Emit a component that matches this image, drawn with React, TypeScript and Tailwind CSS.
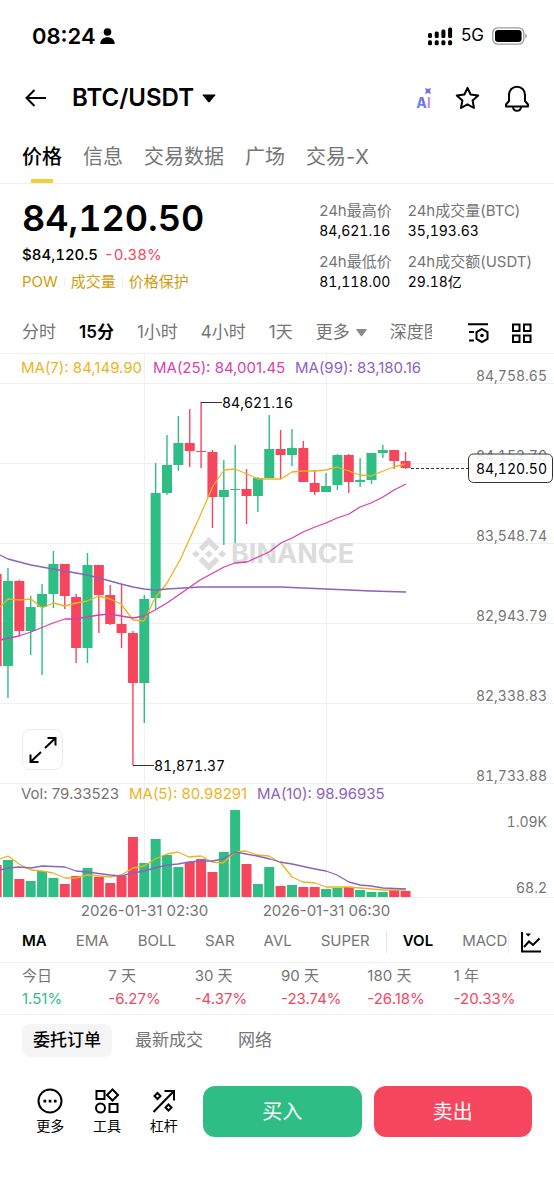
import React, { useState } from 'react';
import { clsx } from 'clsx';
import { SiBinance } from 'react-icons/si';

type Side = 'up' | 'down';
// [side, high, bodyTop, bodyBottom, low, volumeTop]
type Candle = [Side, number, number, number, number, number];

const STEP = 11.36;
const FIRST_X = -3.4;
const BODY = 10;
const VOLUME_BASE = 897;

const COLORS = {
  up: '#2ebd85',
  down: '#f6465d',
  yellow: '#ebb41f',
  pink: '#d93fb0',
  purple: '#8a63bd',
  grid: '#f0f0f0',
  label: '#757575',
};

const candles: Candle[] = [
  ['down', 574, 574, 666, 666, 865],
  ['up', 568, 581, 666, 698, 860],
  ['down', 580, 581, 631, 636, 879],
  ['up', 596, 607, 631, 655, 881],
  ['up', 584, 594, 607, 675, 871],
  ['up', 551, 564, 594, 608, 878],
  ['down', 564, 564, 596, 609, 884],
  ['down', 594, 597, 648, 663, 876],
  ['up', 553, 565, 648, 663, 868],
  ['down', 565, 565, 595, 633, 877],
  ['down', 585, 595, 624, 625, 883],
  ['down', 584, 624, 633, 648, 876],
  ['down', 631, 633, 683, 765, 837],
  ['up', 595, 599, 683, 723, 863],
  ['up', 463, 493, 598, 610, 839],
  ['up', 435, 465, 493, 495, 855],
  ['up', 416, 443, 465, 471, 867],
  ['down', 409, 443, 451, 467, 862],
  ['down', 402, 451, 452, 468, 859],
  ['down', 450, 452, 497, 528, 872],
  ['up', 460, 490, 497, 545, 852],
  ['up', 445, 489, 490, 543, 810],
  ['down', 469, 489, 496, 524, 864],
  ['up', 477, 478, 496, 512, 884],
  ['up', 415, 449, 478, 478, 867],
  ['down', 430, 449, 455, 479, 886],
  ['up', 429, 448, 455, 466, 885],
  ['down', 441, 448, 482, 482, 887],
  ['down', 470, 483, 492, 495, 887],
  ['up', 473, 486, 492, 492, 889],
  ['up', 454, 455, 485, 490, 888],
  ['down', 454, 455, 482, 493, 887],
  ['up', 458, 480, 482, 487, 890],
  ['up', 453, 453, 480, 484, 892],
  ['up', 445, 450, 453, 458, 892],
  ['down', 450, 450, 461, 469, 890],
  ['down', 452, 461, 468, 469, 891],
];

const priceLines = [
  {
    color: COLORS.yellow,
    points:
      '0,607 8,599 19,600 31,599 42,608 53,603 65,606 76,603 87,601 99,596 110,599 121,604 133,620 144,621 155,598 167,583 180,560 200,516 213,486 224,470 235,469 247,474 258,479 269,479 281,479 292,472 303,471 315,471 326,470 337,467 349,471 360,475 371,476 383,471 394,467 405,464',
  },
  {
    color: COLORS.pink,
    points:
      '0,640 19,636 31,632 53,623 65,619 76,619 87,617 99,615 110,614 121,616 133,618 144,616 155,610 167,603 180,594 200,580 213,573 224,567 235,563 247,562 258,557 269,552 281,543 292,538 303,532 315,527 326,523 337,518 349,514 360,507 371,503 383,497 394,490 406,484',
  },
  {
    color: COLORS.purple,
    points:
      '0,555 8,559 31,565 53,569 76,573 87,575 99,578 110,581 121,584 133,587 144,589 155,590 167,589 200,587 235,587 281,587 303,588 326,589 349,590 371,591 406,592',
  },
];

const volumeLines = [
  {
    color: COLORS.yellow,
    points:
      '0,859 8,856 19,864 31,870 42,871 53,873 65,878 76,878 87,875 99,876 110,877 121,875 133,868 144,866 155,859 167,854 178,852 189,857 201,856 212,862 223,863 235,852 246,851 257,855 269,856 281,863 292,877 303,882 315,883 326,887 349,887 360,888 383,890 406,890',
  },
  {
    color: COLORS.purple,
    points:
      '0,870 8,868 19,867 31,868 42,866 65,867 76,871 87,872 110,875 121,876 133,873 144,871 155,868 167,865 178,864 189,862 201,861 212,861 223,859 235,852 246,854 257,856 270,859 280,862 292,864 315,869 326,871 337,875 349,882 360,885 371,886 383,888 406,889',
  },
];

const axis = [
  { y: 383, text: '84,758.65' },
  { y: 463, text: '84,153.70' },
  { y: 543, text: '83,548.74' },
  { y: 623, text: '82,943.79' },
  { y: 703, text: '82,338.83' },
  { y: 783, text: '81,733.88' },
];

const stats = [
  { label: '今日', value: '1.51%', up: true },
  { label: '7 天', value: '-6.27%' },
  { label: '30 天', value: '-4.37%' },
  { label: '90 天', value: '-23.74%' },
  { label: '180 天', value: '-26.18%' },
  { label: '1 年', value: '-20.33%' },
];

const summary = [
  { label: '24h最高价', value: '84,621.16' },
  { label: '24h成交量(BTC)', value: '35,193.63' },
  { label: '24h最低价', value: '81,118.00' },
  { label: '24h成交额(USDT)', value: '29.18亿' },
];

function StatusBar() {
  return (
    <div className="flex h-[72px] items-center justify-between pl-8 pr-[26px]">
      <div className="flex items-center gap-1">
        <span className="text-[22px] font-semibold">08:24</span>
        <svg width="15" height="16" viewBox="0 0 15 16" fill="currentColor">
          <circle cx="7.5" cy="4" r="3.8" />
          <path d="M0.3 16C0.3 11.5 3.5 9.2 7.5 9.2S14.7 11.5 14.7 16Z" />
        </svg>
      </div>
      <div className="flex items-center gap-2">
        <svg width="25" height="19" viewBox="0 0 25 19" fill="currentColor">
          <rect x="0" y="6" width="4" height="5" rx="1.5" />
          <rect x="6.7" y="4.4" width="4" height="6.6" rx="1.5" />
          <rect x="13.4" y="2.4" width="4" height="8.6" rx="1.5" />
          <rect x="20.1" y="0.6" width="4" height="10.4" rx="1.5" />
          <rect x="0" y="13.2" width="4" height="5" rx="1.5" />
          <rect x="6.7" y="13.2" width="4" height="5" rx="1.5" />
          <rect x="13.4" y="13.2" width="4" height="5" rx="1.5" />
          <rect x="20.1" y="13.2" width="4" height="5" rx="1.5" />
        </svg>
        <span className="text-[17px]">5G</span>
        <svg width="36" height="18" viewBox="0 0 36 18">
          <rect x="0.8" y="0.8" width="31" height="16.4" rx="5" fill="none" stroke="#999" strokeWidth="1.3" />
          <rect x="3" y="3" width="26.6" height="12" rx="3" fill="#000" />
          <path d="M33.3 6.5c2 .8 2 4.200 0 5z" fill="#999" />
        </svg>
      </div>
    </div>
  );
}

function Header() {
  return (
    <header className="flex h-[52px] items-center px-6">
      <button type="button" aria-label="返回">
        <svg width="24" height="20" viewBox="0 0 24 20" fill="none" stroke="currentColor" strokeWidth="2">
          <path d="M22 10H2.500M10.500 2L2.500 10L10.500 18" />
        </svg>
      </button>
      <button type="button" className="ml-6 flex items-center gap-2 text-2xl font-semibold">
        BTC/USDT
        <svg width="14" height="9" viewBox="0 0 14 9" fill="currentColor">
          <path d="M1 .5h12q.8 0 .3.700L7.800 8q-.8.800-1.600 0L.7 1.200Q.2.500 1 .5z" />
        </svg>
      </button>
      <div className="ml-auto flex items-center gap-6">
        <button type="button" className="relative bg-linear-to-r from-[#6aa0f5] via-[#6b6cf0] to-[#dba8e8] bg-clip-text pt-[10px] text-sm font-extrabold text-transparent">
          AI
          <svg className="absolute right-0 top-[5px]" width="6" height="6" viewBox="0 0 6 6" fill="#6f74ee">
            <path d="M0 0L3 1L6 0L5 3L6 6L3 5L0 6L1 3Z" />
          </svg>
        </button>
        <button type="button" aria-label="收藏">
          <svg width="25" height="25" viewBox="0 0 25 25" fill="none" stroke="currentColor" strokeWidth="2" strokeLinejoin="round">
            <path d="M12.500 1.800L15.600 8.500L23.200 9.400L17.600 14.500L19 22L12.500 18.300L6 22L7.400 14.500L1.800 9.400L9.400 8.500Z" />
          </svg>
        </button>
        <button type="button" aria-label="提醒">
          <svg width="26" height="27" viewBox="0 0 26 27" fill="none" stroke="currentColor" strokeWidth="2" strokeLinejoin="round">
            <path d="M2 21.500V19.500L5 16V10C5 5 8.500 1.800 13 1.800S21 5 21 10V16L24 19.500V21.500Z" />
            <path d="M9 22C9.400 27 16.600 27 17 22" />
          </svg>
        </button>
      </div>
    </header>
  );
}

function Tabs() {
  const [active, setActive] = useState('价格');
  return (
    <nav className="flex h-[60px] items-stretch gap-[21px] border-b border-[#f0f0f0] px-[22px] text-xl">
      {['价格', '信息', '交易数据', '广场', '交易-X'].map((tab) => (
        <button
          key={tab}
          type="button"
          onClick={() => setActive(tab)}
          className={clsx(
            'relative pb-[2px] pt-2',
            active === tab ? 'font-medium text-black' : 'text-[#757575]'
          )}
        >
          {tab}
          {active === tab && (
            <span className="absolute bottom-0 left-1/2 h-1 w-[22px] -translate-x-1/2 bg-[#f3cf36]" />
          )}
        </button>
      ))}
    </nav>
  );
}

function PriceSummary() {
  return (
    <section className="flex items-start justify-between pl-[22px] pr-[22px] pt-2">
      <div>
        <div className="pt-1 text-4xl font-semibold leading-[44px] tabular-nums">84,120.50</div>
        <div className="mt-[3px] flex gap-[6px] text-[15px] leading-6 tabular-nums">
          <span className="font-medium">$84,120.5</span>
          <span className="text-[#f6465d]">-0.38%</span>
        </div>
        <div className="mt-[3px] flex items-center gap-[6px] text-[15px] leading-6 text-[#d19c0b]">
          <a href="#pow">POW</a>
          <span className="h-2 w-px bg-[#eee]" />
          <a href="#volume">成交量</a>
          <span className="h-2 w-px bg-[#eee]" />
          <a href="#protect">价格保护</a>
        </div>
      </div>
      <dl className="grid grid-cols-[auto_auto] gap-x-4 gap-y-[11px] pt-[9px]">
        {summary.map((item) => (
          <div key={item.label} className="leading-5">
            <dt className="text-[15px] leading-5 text-[#757575]">{item.label}</dt>
            <dd className="text-sm leading-5 tabular-nums">{item.value}</dd>
          </div>
        ))}
      </dl>
    </section>
  );
}

function Intervals() {
  const [active, setActive] = useState('15分');
  return (
    <div className="mt-[19px] flex h-10 items-center justify-between px-[22px]">
      <div className="flex flex-1 items-center gap-[23px] overflow-hidden whitespace-nowrap text-[17px] text-[#757575]">
        {['分时', '15分', '1小时', '4小时', '1天'].map((item) => (
          <button
            key={item}
            type="button"
            onClick={() => setActive(item)}
            className={clsx(active === item && 'font-semibold text-black')}
          >
            {item}
          </button>
        ))}
        <button type="button" className="flex items-center gap-[6px]">
          更多
          <svg width="11" height="8" viewBox="0 0 11 8" fill="#8a8a8a">
            <path d="M.5 0h10q.6.200.2.700L6 7.300q-.5.500-1 0L.3.700Q0 .2.500 0z" />
          </svg>
        </button>
        <button type="button">深度图</button>
      </div>
      <div className="flex shrink-0 items-center gap-[22px] pl-9">
        <button type="button" aria-label="图表设置">
          <svg width="22" height="22" viewBox="0 0 22 22" fill="none" stroke="currentColor" strokeWidth="2">
            <path d="M0 2.200H20M1 10H6M1 18.500H6" />
            <path d="M14 7L19.500 10.200V16.800L14 20L8.500 16.800V10.200Z" />
            <circle cx="14" cy="13.500" r="1.800" fill="currentColor" stroke="none" />
          </svg>
        </button>
        <button type="button" aria-label="布局">
          <svg width="20" height="20" viewBox="0 0 20 20" fill="none" stroke="currentColor" strokeWidth="2">
            <path d="M1 1.500H7.500V8H1ZM12 1.500H18.500V8H12ZM1 12.500H7.500V19H1ZM12 12.500H18.500V19H12Z" />
          </svg>
        </button>
      </div>
    </div>
  );
}

function Chart() {
  return (
    <section className="relative">
      <svg className="block h-auto w-full" viewBox="0 353 554 568" fontSize="15">
        {/* Grid */}
        <g stroke={COLORS.grid}>
          <path d="M0 353.500H554M0 897.500H554M144.500 353V897M326.500 353V897" />
          {axis.map((a) => (
            <line key={a.y} x1="0" x2="554" y1={a.y + 0.5} y2={a.y + 0.5} />
          ))}
        </g>

        {/* Watermark */}
        <g fill="#dcdcdc" color="#dcdcdc">
          <SiBinance x="192" y="537" size={34} />
          <text x="231" y="563" fontSize="27" fontWeight="700">BINANCE</text>
        </g>

        <g fill={COLORS.label} textAnchor="end" fontSize="14" className="tabular-nums">
          {axis.map((a) => (
            <text key={a.y} x="547" y={a.y - 2}>{a.text}</text>
          ))}
          <text x="547" y="827">1.09K</text>
          <text x="547" y="893">68.2</text>
        </g>

        {/* Candles and volume */}
        {candles.map(([side, high, top, bottom, low, volume], i) => {
          const x = FIRST_X + i * STEP;
          return (
            <g key={i} fill={COLORS[side]}>
              <rect x={x - 0.7} y={high} width="1.4" height={low - high} />
              <rect x={x - BODY / 2} y={top} width={BODY} height={Math.max(bottom - top, 1)} />
              <rect x={x - BODY / 2} y={volume} width={BODY} height={VOLUME_BASE - volume} />
            </g>
          );
        })}

        {[...priceLines, ...volumeLines].map((line, i) => (
          <polyline key={i} points={line.points} fill="none" stroke={line.color} strokeWidth="1.3" strokeLinejoin="round" />
        ))}

        {/* High and low marks */}
        <g stroke="#333" strokeWidth="1">
          <path d="M201 402.500H222M133 765.500H154" />
          <path d="M411 468.500H468" strokeDasharray="3 2" />
        </g>
        <g fontSize="14" className="tabular-nums">
          <text x="222" y="408">84,621.16</text>
          <text x="154" y="771">81,871.37</text>

          {/* Last price */}
          <rect x="468.500" y="454" width="84" height="28.500" rx="5" fill="#fff" fillOpacity="0.85" stroke="#333" />
          <text x="547" y="474" textAnchor="end">84,120.50</text>
        </g>

        <g fill={COLORS.label} textAnchor="middle">
          <text x="144.500" y="916">2026-01-31 02:30</text>
          <text x="326.500" y="916">2026-01-31 06:30</text>
        </g>

        {/* Legends */}
        <text x="21" y="373" fill={COLORS.yellow}>MA(7): 84,149.90</text>
        <text x="153" y="373" fill={COLORS.pink}>MA(25): 84,001.45</text>
        <text x="295" y="373" fill={COLORS.purple}>MA(99): 83,180.16</text>
        <text x="21" y="799" fill={COLORS.label}>Vol: 79.33523</text>
        <text x="129" y="799" fill={COLORS.yellow}>MA(5): 80.98291</text>
        <text x="257" y="799" fill={COLORS.purple}>MA(10): 98.96935</text>
      </svg>

      <button
        type="button"
        aria-label="全屏"
        className="absolute bottom-[151px] left-[22px] flex size-[41px] items-center justify-center rounded-lg border border-[#ececec] bg-white"
      >
        <svg width="28" height="28" viewBox="0 0 28 28" fill="none" stroke="currentColor" strokeWidth="2">
          <path d="M16 12L26 2.500M18.500 2H26.500V9.500M12 16L2 25.500M9.500 26H1.500V18.500" />
        </svg>
      </button>
    </section>
  );
}

function Indicators() {
  return (
    <div className="flex h-[42px] items-center border-b border-[#f0f0f0] pl-[22px] pr-3 text-[15px] text-[#757575]">
      <div className="flex flex-1 items-center gap-[29px] overflow-hidden whitespace-nowrap">
        <button type="button" className="font-semibold text-black">MA</button>
        <button type="button">EMA</button>
        <button type="button">BOLL</button>
        <button type="button">SAR</button>
        <button type="button">AVL</button>
        <button type="button">SUPER</button>
        <span className="-mx-[13px] h-[22px] w-px shrink-0 bg-[#e8e8e8]" />
        <button type="button" className="font-semibold text-black">VOL</button>
        <button type="button">MACD</button>
      </div>
      <button type="button" aria-label="指标设置" className="shrink-0 border-l border-[#eee] pl-3 text-black">
        <svg width="21" height="22" viewBox="0 0 21 22" fill="none" stroke="currentColor" strokeWidth="2">
          <path d="M1 1V20.500H20" />
          <path d="M3 16L8 10.500L12 14L18.500 7.500" />
          <path d="M4.500 2.500H10L7.200 5.500Z" fill="currentColor" stroke="none" />
        </svg>
      </button>
    </div>
  );
}

function Stats() {
  return (
    <div className="border-b border-[#f0f0f0] pb-1 pl-[22px] pr-[14px] pt-[1px]">
      <table className="w-full table-fixed text-left text-[15px] leading-[23px]">
        <thead>
          <tr className="text-[#757575]">
            {stats.map((s) => (
              <th key={s.label} className="p-0 font-normal">{s.label}</th>
            ))}
          </tr>
        </thead>
        <tbody>
          <tr>
            {stats.map((s) => (
              <td key={s.label} className={clsx('p-0', s.up ? 'text-[#2ebd85]' : 'text-[#f6465d]')}>
                {s.value}
              </td>
            ))}
          </tr>
        </tbody>
      </table>
    </div>
  );
}

function OrderTabs() {
  return (
    <div className="flex items-center gap-[23px] px-[22px] pt-[9px] text-[17px] text-[#757575]">
      <button type="button" className="h-[33px] rounded-lg bg-[#f5f5f5] px-[11px] font-medium text-black">委托订单</button>
      <button type="button">最新成交</button>
      <button type="button" className="ml-3">网络</button>
    </div>
  );
}

function BottomBar() {
  return (
    <footer className="mt-[29px] flex items-center px-[22px] pb-[63px]">
      <div className="flex w-[170px] text-sm">
        <button type="button" className="flex flex-1 flex-col items-center gap-[2px]">
          <svg width="26" height="26" viewBox="0 0 26 26" fill="none" stroke="currentColor" strokeWidth="2">
            <circle cx="13" cy="13" r="11.500" />
            <path d="M6.500 11.700h2.700v2.700H6.500zM11.700 11.700h2.700v2.700h-2.700zM16.900 11.700h2.700v2.700h-2.700z" fill="currentColor" stroke="none" />
          </svg>
          更多
        </button>
        <button type="button" className="flex flex-1 flex-col items-center gap-[2px]">
          <svg width="26" height="26" viewBox="0 0 26 26" fill="none" stroke="currentColor" strokeWidth="2">
            <path d="M2.500 3H10.500V11H2.500ZM18.500 1.500L24 7L18.500 12.500L13 7ZM15.500 16H23.500V24H15.500Z" />
            <circle cx="6.500" cy="20" r="4.500" />
          </svg>
          工具
        </button>
        <button type="button" className="flex flex-1 flex-col items-center gap-[2px]">
          <svg width="26" height="26" viewBox="0 0 26 26" fill="none" stroke="currentColor" strokeWidth="2">
            <path d="M2.500 24L22.500 3.500M13.500 3H23V12.500" />
            <path d="M6.500 5L9.500 8L6.500 11L3.500 8ZM17.500 16.500L20.500 19.500L17.500 22.500L14.500 19.500Z" />
          </svg>
          杠杆
        </button>
      </div>
      <div className="ml-[11px] flex flex-1 gap-3 text-xl text-white">
        <button type="button" className="h-[51px] flex-1 rounded-xl bg-[#2ebd85]">买入</button>
        <button type="button" className="h-[51px] flex-1 rounded-xl bg-[#f6465d]">卖出</button>
      </div>
    </footer>
  );
}

export default function App() {
  return (
    <main className="min-h-screen bg-white font-['Inter','Noto_Sans_CJK_SC',sans-serif] text-black">
      <StatusBar />
      <Header />
      <Tabs />
      <PriceSummary />
      <Intervals />
      <Chart />
      <Indicators />
      <Stats />
      <OrderTabs />
      <BottomBar />
    </main>
  );
}
